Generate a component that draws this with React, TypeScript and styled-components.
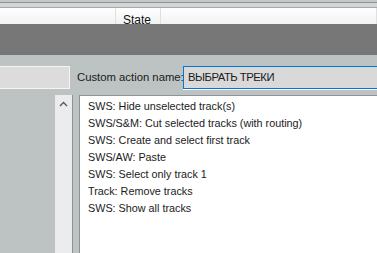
import React from 'react'
import styled, { createGlobalStyle } from 'styled-components';

const GlobalStyle = createGlobalStyle`
    html, body {
        margin: 0;
        padding: 0;
        overflow: hidden;
    }
    body {
        font-family: "Liberation Sans", Arial, sans-serif;
        font-size: 11px;
        color: #1b1b1b;
    }
`;

const Window = styled.div`
    width: 377px;
    height: 253px;
    display: flex;
    flex-direction: column;
    background: #bdc2c2;
    overflow: hidden;
`;

const TopStrip = styled.div`
    height: 2px;
    background: #c4c8c8;
    border-bottom: 1px solid #8f9595;
`;

const SubStrip = styled.div`
    height: 4px;
    background: #d3d6d6;
    border-bottom: 1px solid #a3a8a8;
`;

const Header = styled.div`
    height: 16px;
    display: flex;
    background: linear-gradient(#ffffff, #f1f2f2);
    overflow: hidden;
`;

interface CellProps {
    width: number;
}

const HeaderCell = styled.div<CellProps>`
    width: ${props => props.width}px;
    flex: none;
    border-right: 1px solid #dfe1e1;
    padding: 5px 0 0 7px;
    box-sizing: border-box;
    font-size: 12px;
    line-height: 14px;
    color: #111;
`;

const DarkBand = styled.div`
    height: 31px;
    background: #777777;
`;

const Panel = styled.div`
    flex: 1;
    display: flex;
    flex-direction: column;
    padding-top: 10px;
`;

const NameRow = styled.div`
    display: flex;
    align-items: center;
    height: 24px;
`;

const FilterBox = styled.div`
    width: 70px;
    height: 23px;
    box-sizing: border-box;
    border: 1px solid #f4f4f4;
    border-left: none;
    background: #dcdcdc;
`;

const NameLabel = styled.label`
    margin-left: 7px;
    width: 106px;
    white-space: nowrap;
    font-size: 11.3px;
`;

const NameInput = styled.div`
    flex: 1;
    height: 23px;
    box-sizing: border-box;
    margin-right: -10px;
    border: 1px solid #0078d7;
    box-shadow: 0 1px 0 #ffffff;
    background: #d9d9d9;
    padding: 4px 0 0 4px;
    font-size: 11.3px;
    letter-spacing: -0.5px;
    white-space: nowrap;
`;

const Body = styled.div`
    flex: 1;
    display: flex;
    margin-top: 6px;
`;

const SidePane = styled.div`
    width: 55px;
    flex: none;
`;

const ScrollBar = styled.div`
    width: 17px;
    flex: none;
    background: #ececec;
    border-right: 1px solid #8e9393;
    position: relative;
`;

const ArrowUp = styled.svg`
    position: absolute;
    left: 4px;
    top: 6px;
`;

const ListBox = styled.ul`
    flex: 1;
    margin: 0 0 0 6px;
    padding: 2px 0 0 8px;
    list-style: none;
    background: #ffffff;
    border-left: 1px solid #8e9393;
    border-top: 1px solid #8e9393;
`;

const ListItem = styled.li`
    height: 17px;
    line-height: 17px;
    white-space: nowrap;
    font-size: 10.8px;
`;

const actions = [
    "SWS: Hide unselected track(s)",
    "SWS/S&M: Cut selected tracks (with routing)",
    "SWS: Create and select first track",
    "SWS/AW: Paste",
    "SWS: Select only track 1",
    "Track: Remove tracks",
    "SWS: Show all tracks",
];

const App: React.FC = () => (
    <>
        <GlobalStyle />
        <Window>
            <TopStrip />
            <SubStrip />
            <Header>
                <HeaderCell width={116} />
                <HeaderCell width={45}>State</HeaderCell>
                <HeaderCell width={216} />
            </Header>
            <DarkBand />
            <Panel>
                <NameRow>
                    <FilterBox />
                    <NameLabel>Custom action name:</NameLabel>
                    <NameInput>ВЫБРАТЬ ТРЕКИ</NameInput>
                </NameRow>
                <Body>
                    <SidePane />
                    <ScrollBar>
                        <ArrowUp width="9" height="6" viewBox="0 0 9 6">
                            <path d="M1 5 L4.5 1.5 L8 5" fill="none" stroke="#555" strokeWidth="1.3" />
                        </ArrowUp>
                    </ScrollBar>
                    <ListBox>
                        {actions.map(label => <ListItem key={label}>{label}</ListItem>)}
                    </ListBox>
                </Body>
            </Panel>
        </Window>
    </>
)

export default App;
